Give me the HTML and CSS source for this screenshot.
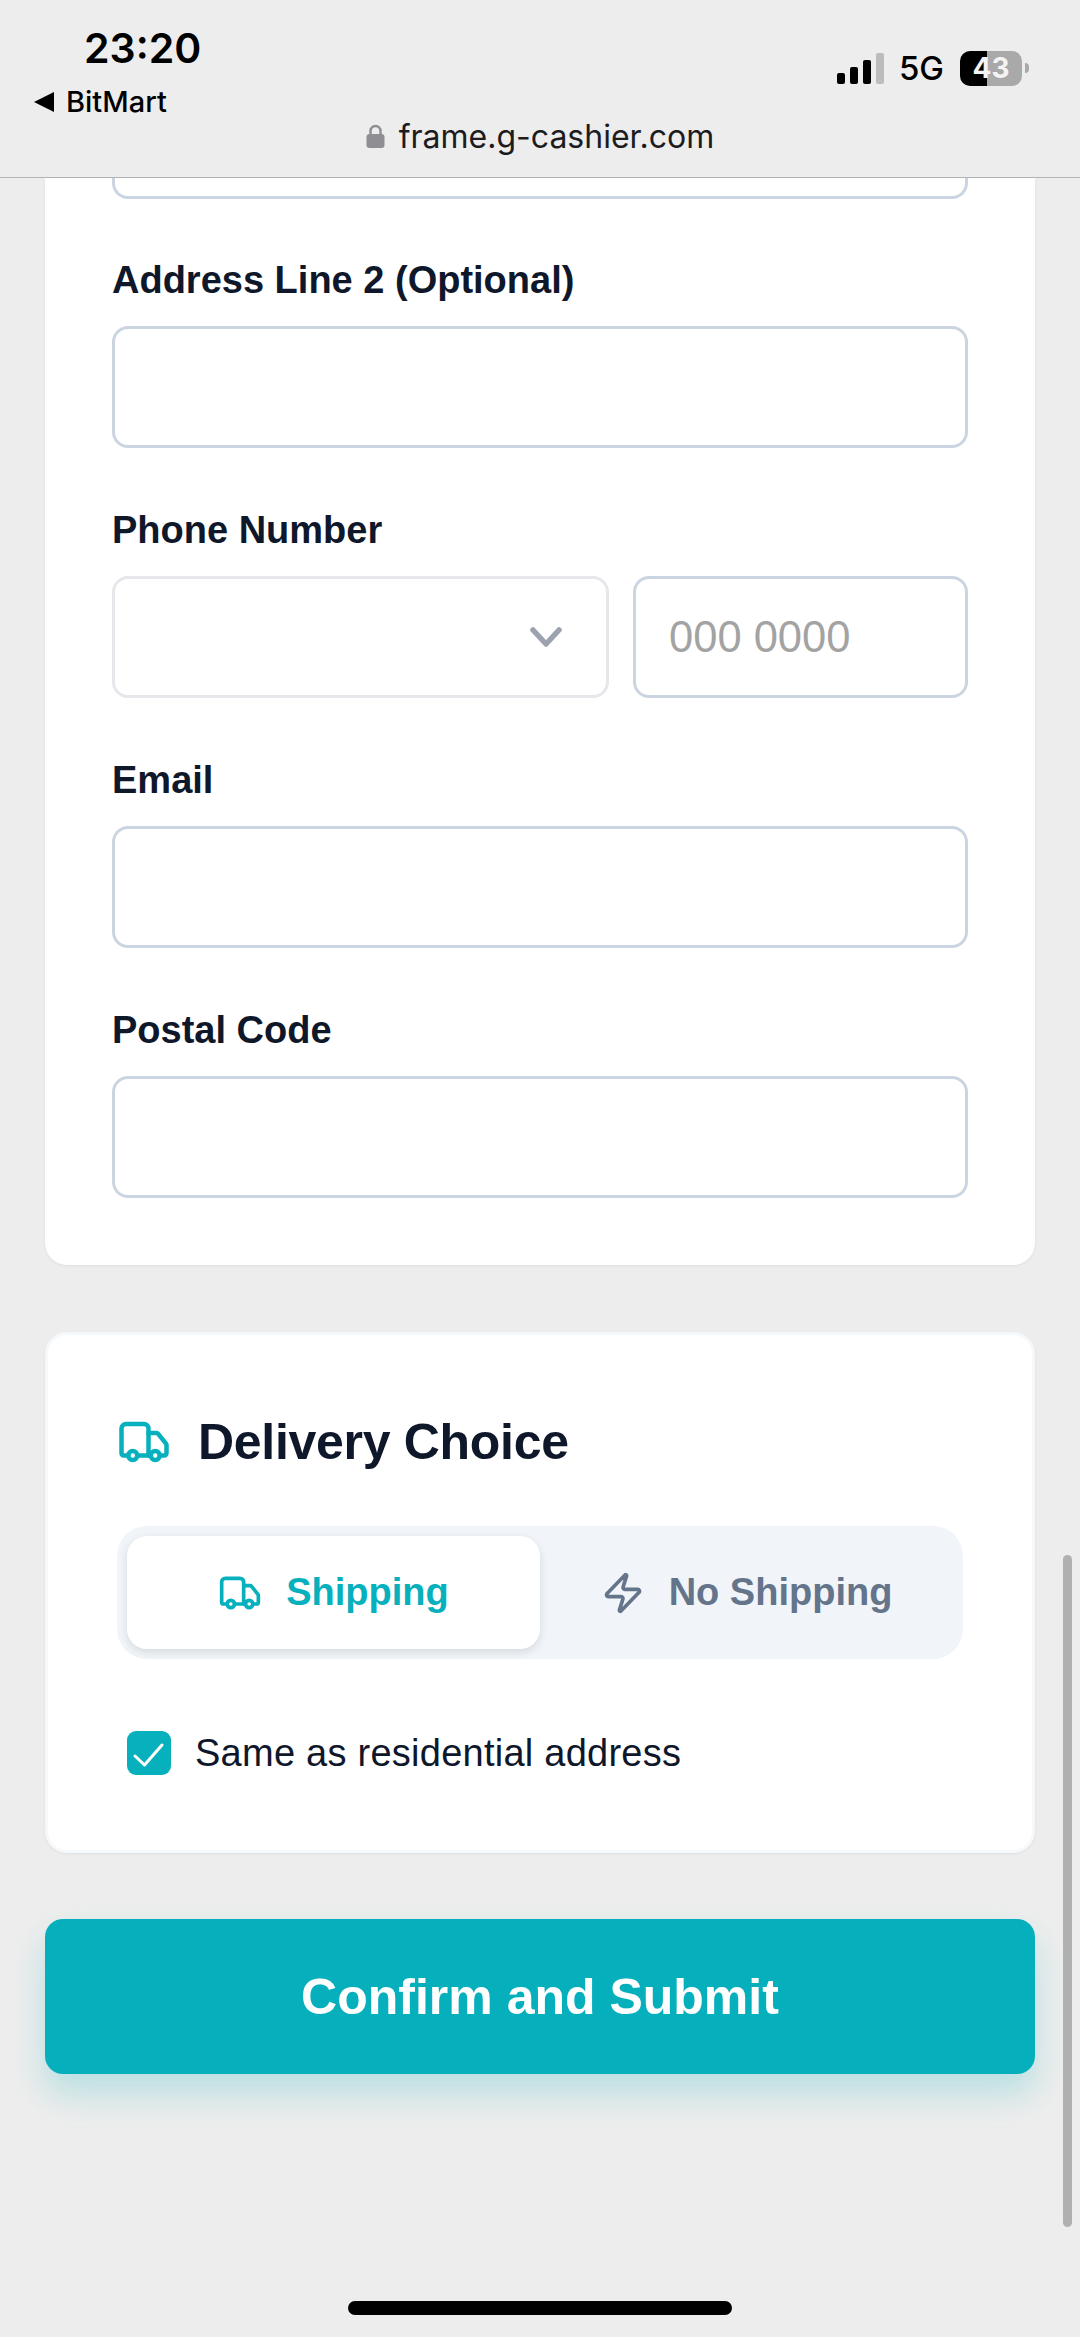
FILE: index.html
```html
<!DOCTYPE html>
<html lang="en">
<head>
    <meta charset="UTF-8">
    <meta name="viewport" content="width=device-width, initial-scale=1.0">
    <title>Delivery Details</title>
    <link rel="stylesheet" href="styles.css">
</head>
<body>
    <header class="topbar">
        <div class="status-row">
            <div class="status-left">
                <div class="time">23:20</div>
                <div class="back-app"><span class="back-arrow"></span>BitMart</div>
            </div>
            <div class="status-right">
                <div class="signal">
                    <span class="bar bar-1"></span>
                    <span class="bar bar-2"></span>
                    <span class="bar bar-3"></span>
                    <span class="bar bar-4"></span>
                </div>
                <span class="network">5G</span>
                <div class="battery">43</div>
                <span class="battery-nub"></span>
            </div>
        </div>
        <div class="url-row">
            <svg class="lock" viewBox="0 0 19 24" fill="none">
                <path d="M4.5 11V7a5 5 0 0 1 10 0v4" stroke="#8e8e93" stroke-width="2.4"/>
                <rect x="0.5" y="10" width="18" height="14" rx="3" fill="#8e8e93"/>
            </svg>
            <span>frame.g-cashier.com</span>
        </div>
    </header>

    <main class="page">
        <section class="card form-card">
            <div class="input-stub"></div>

            <div class="field">
                <label for="address2">Address Line 2 (Optional)</label>
                <input type="text" id="address2">
            </div>

            <div class="field">
                <label for="phone">Phone Number</label>
                <div class="phone-row">
                    <div class="select-wrap">
                        <select id="phoneCode" aria-label="Country code"></select>
                        <svg class="chevron" viewBox="0 0 32 20" fill="none">
                            <polyline points="3,3 16,17 29,3" stroke="#9ca3af" stroke-width="5.5" stroke-linecap="round" stroke-linejoin="round"/>
                        </svg>
                    </div>
                    <input type="text" id="phone" class="phone-input" placeholder="000 0000">
                </div>
            </div>

            <div class="field">
                <label for="email">Email</label>
                <input type="text" id="email">
            </div>

            <div class="field">
                <label for="postal">Postal Code</label>
                <input type="text" id="postal">
            </div>
        </section>

        <section class="card delivery-card">
            <div class="delivery-title">
                <svg class="icon-title" viewBox="0 0 24 24" fill="none" stroke="currentColor" stroke-width="2" stroke-linecap="round" stroke-linejoin="round">
                    <path d="M14 18V6a2 2 0 0 0-2-2H4a2 2 0 0 0-2 2v11a1 1 0 0 0 1 1h2"/>
                    <path d="M15 18H9"/>
                    <path d="M19 18h2a1 1 0 0 0 1-1v-3.65a1 1 0 0 0-.22-.624l-3.48-4.35A1 1 0 0 0 17.52 8H14"/>
                    <circle cx="17" cy="18" r="2"/>
                    <circle cx="7" cy="18" r="2"/>
                </svg>
                <h2>Delivery Choice</h2>
            </div>

            <div class="tabs">
                <div class="tab active">
                    <svg class="icon-tab" viewBox="0 0 24 24" fill="none" stroke="currentColor" stroke-width="2" stroke-linecap="round" stroke-linejoin="round">
                        <path d="M14 18V6a2 2 0 0 0-2-2H4a2 2 0 0 0-2 2v11a1 1 0 0 0 1 1h2"/>
                        <path d="M15 18H9"/>
                        <path d="M19 18h2a1 1 0 0 0 1-1v-3.65a1 1 0 0 0-.22-.624l-3.48-4.35A1 1 0 0 0 17.52 8H14"/>
                        <circle cx="17" cy="18" r="2"/>
                        <circle cx="7" cy="18" r="2"/>
                    </svg>
                    Shipping
                </div>
                <div class="tab">
                    <svg class="icon-tab" viewBox="0 0 24 24" fill="none" stroke="currentColor" stroke-width="2" stroke-linecap="round" stroke-linejoin="round">
                        <path d="M4 14a1 1 0 0 1-.78-1.63l9.9-10.2a.5.5 0 0 1 .86.46l-1.92 6.02A1 1 0 0 0 13 10h7a1 1 0 0 1 .78 1.63l-9.9 10.2a.5.5 0 0 1-.86-.46l1.92-6.02A1 1 0 0 0 11 14z"/>
                    </svg>
                    No Shipping
                </div>
            </div>

            <div class="same-address">
                <span class="checkbox">
                    <svg viewBox="0 0 44 44" fill="none">
                        <polyline points="8,25 17.5,34 35,14" stroke="#fff" stroke-width="3" stroke-linecap="round" stroke-linejoin="round"/>
                    </svg>
                </span>
                <span>Same as residential address</span>
            </div>
        </section>

        <button type="button" class="submit">Confirm and Submit</button>
    </main>

    <div class="scrollbar"></div>
    <div class="home-indicator"></div>
</body>
</html>
```

FILE: styles.css
```css
* {
    box-sizing: border-box;
}
html, body {
    margin: 0;
    padding: 0;
}
body {
    position: relative;
    height: 2337px;
    overflow: hidden;
    background-color: #ededed;
    color: #0f172a;
    font-family: "Liberation Sans", Arial, sans-serif;
}

/* phone status bar + address */
.topbar {
    height: 178px;
    padding-top: 24px;
    border-bottom: 1px solid #b4b4b6;
    color: #000;
    font-family: Inter, "Liberation Sans", sans-serif;
}
.status-row {
    display: flex;
    justify-content: space-between;
    height: 96px;
    padding: 0 51px 0 34px;
}
.time {
    margin-left: 50px;
    font-size: 41px;
    font-weight: 600;
    line-height: 48px;
}
.back-app {
    display: flex;
    align-items: center;
    margin-top: 12px;
    font-size: 29px;
    font-weight: 500;
    line-height: 36px;
}
.back-arrow {
    width: 0;
    height: 0;
    margin-right: 12px;
    border-top: 10px solid transparent;
    border-bottom: 10px solid transparent;
    border-right: 20px solid #000;
}
.status-right {
    display: flex;
    align-items: center;
    height: 36px;
    margin-top: 26px;
}
.signal {
    display: flex;
    align-items: flex-end;
    gap: 5px;
    height: 31px;
}
.bar {
    width: 8px;
    border-radius: 2px;
    background: #000;
}
.bar-1 { height: 11px; }
.bar-2 { height: 17px; }
.bar-3 { height: 24px; }
.bar-4 { height: 31px; background: #bcbcbc; }
.network {
    margin-left: 15px;
    font-size: 33px;
    font-weight: 500;
}
.battery {
    width: 62px;
    height: 35px;
    margin-left: 16px;
    border-radius: 10px;
    background: linear-gradient(to right, #000 43.5%, #a9a9a9 43.5%);
    color: #f4f4f4;
    font-size: 28px;
    font-weight: 700;
    line-height: 35px;
    text-align: center;
}
.battery-nub {
    width: 4px;
    height: 10px;
    margin-left: 3px;
    border-radius: 0 4px 4px 0;
    background: #a9a9a9;
}
.url-row {
    display: flex;
    align-items: center;
    justify-content: center;
    gap: 14px;
    height: 32px;
    color: #1c1c1e;
    font-size: 32px;
}
.lock {
    width: 19px;
    height: 24px;
}

/* page */
.page {
    padding: 0 45px;
}
.card {
    background: #fff;
    border-radius: 22px;
    box-shadow: 0 1px 3px rgba(15, 23, 42, 0.06);
}
.form-card {
    padding: 0 67px 67px;
    border-radius: 0 0 22px 22px;
}
.input-stub {
    height: 21px;
    border: 3px solid #cbd5e1;
    border-top: none;
    border-radius: 0 0 16px 16px;
}
.field {
    margin-top: 59px;
}
.field + .field {
    margin-top: 60px;
}
label {
    display: block;
    height: 44px;
    margin-bottom: 24px;
    font-size: 38px;
    font-weight: 700;
    line-height: 44px;
}
input, select {
    display: block;
    width: 100%;
    height: 122px;
    padding: 0 33px;
    border: 3px solid #cbd5e1;
    border-radius: 16px;
    outline: none;
    background: #fff;
    font-family: inherit;
    font-size: 43.5px;
}
input::placeholder {
    color: #a3a3a3;
    opacity: 1;
}
select {
    border-color: #e5e7eb;
    appearance: none;
}
.phone-row {
    display: flex;
    gap: 24px;
}
.select-wrap {
    position: relative;
    flex: 0 0 497px;
}
.chevron {
    position: absolute;
    top: 51px;
    right: 47px;
    width: 32px;
    height: 20px;
}
.phone-input {
    flex: 1;
    min-width: 0;
}

.delivery-card {
    margin-top: 67px;
    padding: 80px 69px 75px;
    border: 3px solid #f5f9fc;
}
.delivery-title {
    display: flex;
    align-items: center;
    gap: 27px;
    color: #06b0bc;
}
.icon-title {
    width: 54px;
    height: 54px;
}
.delivery-title h2 {
    margin: 0;
    color: #0f172a;
    font-size: 50px;
    font-weight: 700;
    line-height: 54px;
    letter-spacing: -0.3px;
}
.tabs {
    display: flex;
    margin-top: 57px;
    padding: 10px;
    border-radius: 30px;
    background: #f1f5f9;
}
.tab {
    display: flex;
    flex: 1;
    align-items: center;
    justify-content: center;
    gap: 24px;
    height: 113px;
    border-radius: 20px;
    color: #64748b;
    font-size: 38px;
    font-weight: 700;
}
.tab.active {
    background: #fff;
    color: #06b0bc;
    box-shadow: 0 3px 8px rgba(15, 23, 42, 0.12);
}
.icon-tab {
    width: 44px;
    height: 44px;
}
.same-address {
    display: flex;
    align-items: center;
    gap: 24px;
    margin: 72px 0 0 10px;
    font-size: 38px;
    letter-spacing: 0.25px;
}
.checkbox {
    display: block;
    width: 44px;
    height: 44px;
    border-radius: 9px;
    background: #06b0bc;
}
.checkbox svg {
    display: block;
}

.submit {
    display: block;
    width: 100%;
    height: 155px;
    margin-top: 66px;
    border: none;
    border-radius: 18px;
    background: #05b0bc;
    box-shadow: 0 20px 34px rgba(6, 176, 188, 0.22);
    color: #fff;
    font-family: inherit;
    font-size: 50px;
    font-weight: 700;
}

/* overlays */
.scrollbar {
    position: absolute;
    top: 1555px;
    left: 1063px;
    width: 9px;
    height: 672px;
    border-radius: 5px;
    background: #b0b0b0;
}
.home-indicator {
    position: absolute;
    top: 2301px;
    left: 348px;
    width: 384px;
    height: 14px;
    border-radius: 7px;
    background: #000;
}
```
